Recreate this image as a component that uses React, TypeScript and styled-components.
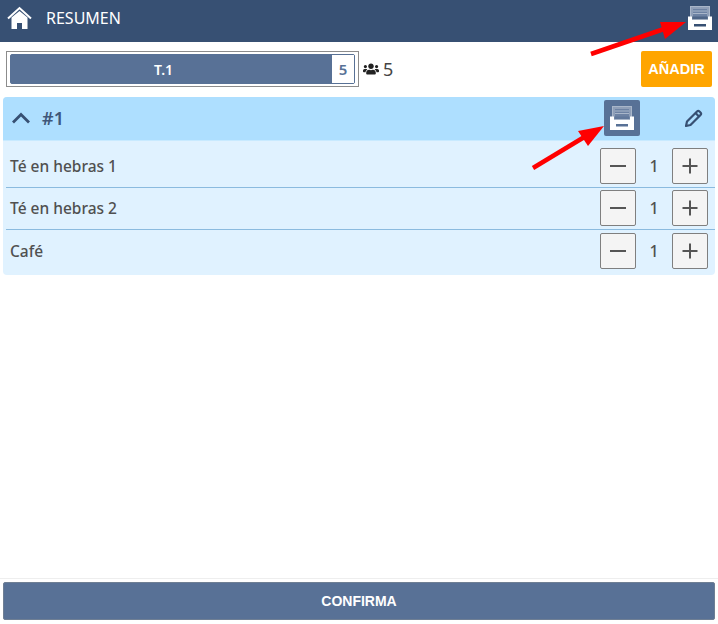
import React from 'react';
import styled, { createGlobalStyle } from 'styled-components';
import { FaUsers } from 'react-icons/fa';

const GlobalStyle = createGlobalStyle`
  html, body {
    margin: 0;
    padding: 0;
    background: #ffffff;
  }
  body {
    font-family: 'Noto Sans', 'Open Sans', sans-serif;
  }
`;

const Page = styled.div`
  position: relative;
  width: 718px;
  height: 624px;
  display: flex;
  flex-direction: column;
  overflow: hidden;
`;

const Header = styled.header`
  height: 42px;
  box-sizing: border-box;
  background: #375073;
  display: flex;
  align-items: center;
  padding: 0 6px 6px 7px;
  color: #ffffff;
`;

const HeaderTitle = styled.span`
  margin-left: 14px;
  font-size: 16px;
  flex: 1;
`;

const TopRow = styled.div`
  display: flex;
  align-items: center;
  padding: 9px 6px 10px;
`;

const TableBox = styled.div`
  width: 353px;
  height: 36px;
  box-sizing: border-box;
  border: 1px solid #8c8c8c;
  padding: 2px 3px;
  display: flex;
`;

const TableBar = styled.div`
  flex: 1;
  display: flex;
  background: #587196;
  border: 1px solid #587196;
  border-radius: 2px;
`;

const TableName = styled.div`
  flex: 1;
  display: flex;
  align-items: center;
  justify-content: center;
  padding-right: 16px;
  color: #ffffff;
  font-size: 14px;
  font-weight: 600;
`;

const TableCount = styled.div`
  width: 22px;
  background: #ffffff;
  color: #587196;
  font-size: 15px;
  font-weight: 600;
  display: flex;
  align-items: center;
  justify-content: center;
`;

const Guests = styled.div`
  display: flex;
  align-items: center;
  gap: 4px;
  margin-left: 4px;
  flex: 1;
  font-size: 18px;
  color: #444444;
`;

const AddButton = styled.button`
  width: 71px;
  height: 36px;
  border: none;
  border-radius: 2px;
  background: #ffa500;
  color: #ffffff;
  font-family: 'Liberation Sans', Arial, sans-serif;
  font-size: 14.5px;
  font-weight: 700;
  padding: 0;
`;

const Panel = styled.section`
  margin: 0 3px;
  background: #e0f2ff;
  border-radius: 4px;
  overflow: hidden;
`;

const PanelHead = styled.div`
  height: 44px;
  box-sizing: border-box;
  background: #aedfff;
  display: flex;
  align-items: center;
  padding: 0 11px 1px 8px;
  border-bottom: 1px solid #c8eaff;
`;

const OrderNo = styled.span`
  flex: 1;
  margin-left: 11px;
  color: #3f5779;
  font-size: 18px;
  font-weight: 600;
`;

const PrintButton = styled.button`
  width: 36px;
  height: 36px;
  border: none;
  padding: 0;
  border-radius: 2px;
  background: #587196;
  display: flex;
  align-items: center;
  justify-content: center;
  margin-right: 44px;
`;

const Row = styled.div<{ $top: number; $bottom: number; $last?: boolean }>`
  display: flex;
  align-items: center;
  margin-left: 3px;
  padding: ${(p) => p.$top}px 7px ${(p) => p.$bottom}px 4px;
  border-bottom: ${(p) => (p.$last ? 'none' : '1px solid #8bbbdf')};
`;

const RowName = styled.span`
  flex: 1;
  font-size: 15.5px;
  color: #505050;
  font-weight: 500;
`;

const StepButton = styled.button`
  width: 36px;
  height: 36px;
  box-sizing: border-box;
  border: 1px solid #7f7f7f;
  border-radius: 2px;
  background: #f4f4f4;
  padding: 0;
  display: flex;
  align-items: center;
  justify-content: center;
`;

const Qty = styled.span`
  width: 36px;
  text-align: center;
  font-size: 16px;
  font-weight: 500;
  color: #505050;
`;

const Footer = styled.footer`
  margin-top: auto;
  border-top: 1px solid #eeeeee;
  padding: 3px 3px 4px;
`;

const ConfirmButton = styled.button`
  display: block;
  width: 100%;
  height: 38px;
  box-sizing: border-box;
  border: 1px solid #6f7f94;
  border-radius: 2px;
  background: #587196;
  color: #ffffff;
  font-family: 'Liberation Sans', Arial, sans-serif;
  font-size: 14px;
  font-weight: 700;
  padding: 0;
`;

const ArrowLayer = styled.svg`
  position: absolute;
  left: 0;
  top: 0;
  pointer-events: none;
`;

const HomeIcon = () => (
  <svg width="25" height="24" viewBox="0 0 25 24">
    <path d="M1 12.500 12.500 2 24 12.500" fill="none" stroke="#fff" strokeWidth="2" />
    <path d="M4.500 11.500 12.500 5 20.500 11.500V23H15V17H10V23H4.500Z" fill="#fff" />
  </svg>
);

const PrintIcon = ({ bg }: { bg: string }) => (
  <svg width="24" height="24" viewBox="0 0 24 24">
    <rect x="2.500" y="0.500" width="19" height="14" fill="#8f9fb8" stroke="#a9b6c9" strokeWidth="1" />
    <rect x="5" y="3" width="14" height="10" fill="#6d82a3" />
    <path d="M5 5h14M5 7.500h14" stroke="#a9b6c9" strokeWidth="1" />
    <path d="M0 10.500H4V13.500H20V10.500H24V24H0Z" fill="#fff" />
    <path d="M4 10.500h16v3H4z" fill={bg} opacity="0.55" />
    <rect x="6" y="18" width="12" height="2.500" fill={bg} />
  </svg>
);

const PencilIcon = () => (
  <svg width="20" height="20" viewBox="0 0 20 20" fill="none" stroke="#375073" strokeWidth="2.200" strokeLinejoin="round">
    <path d="M3 13.500 13 3.500a1.800 1.800 0 0 1 2.500 0l1 1a1.800 1.800 0 0 1 0 2.500L6.500 17 2 18Z" />
    <path d="M11.500 5 15 8.500" />
  </svg>
);

const ChevronIcon = () => (
  <svg width="20" height="12" viewBox="0 0 20 12">
    <path d="M2 10.500 10 2.500l8 8" fill="none" stroke="#375073" strokeWidth="2.800" />
  </svg>
);

const MinusIcon = () => (
  <svg width="18" height="18" viewBox="0 0 18 18">
    <path d="M1 9h16" stroke="#555" strokeWidth="2" />
  </svg>
);

const PlusIcon = () => (
  <svg width="18" height="18" viewBox="0 0 18 18">
    <path d="M1.500 9h15M9 1.500v15" stroke="#555" strokeWidth="2" />
  </svg>
);

const items = [
  { name: 'Té en hebras 1', qty: 1, top: 7, bottom: 3 },
  { name: 'Té en hebras 2', qty: 1, top: 2, bottom: 3 },
  { name: 'Café', qty: 1, top: 3, bottom: 6, last: true },
];

export default function App() {
  return (
    <Page>
      <GlobalStyle />
      <Header>
        <HomeIcon />
        <HeaderTitle>RESUMEN</HeaderTitle>
        <PrintIcon bg="#375073" />
      </Header>

      <TopRow>
        <TableBox>
          <TableBar>
            <TableName>T.1</TableName>
            <TableCount>5</TableCount>
          </TableBar>
        </TableBox>
        <Guests>
          <FaUsers size={16} color="#222" />
          5
        </Guests>
        <AddButton>AÑADIR</AddButton>
      </TopRow>

      <Panel>
        <PanelHead>
          <ChevronIcon />
          <OrderNo>#1</OrderNo>
          <PrintButton>
            <PrintIcon bg="#587196" />
          </PrintButton>
          <PencilIcon />
        </PanelHead>
        {items.map((item) => (
          <Row key={item.name} $top={item.top} $bottom={item.bottom} $last={item.last}>
            <RowName>{item.name}</RowName>
            <StepButton>
              <MinusIcon />
            </StepButton>
            <Qty>{item.qty}</Qty>
            <StepButton>
              <PlusIcon />
            </StepButton>
          </Row>
        ))}
      </Panel>

      <Footer>
        <ConfirmButton>CONFIRMA</ConfirmButton>
      </Footer>

      {/* red annotation arrows drawn over the screenshot */}
      <ArrowLayer width="718" height="624" viewBox="0 0 718 624">
        <path d="M591 54 664 29" stroke="#ff0000" strokeWidth="4.500" />
        <path d="M686 22 660 22 665 39Z" fill="#ff0000" />
        <path d="M533 168 586 136" stroke="#ff0000" strokeWidth="4.500" />
        <path d="M604 126 578 131 588 146Z" fill="#ff0000" />
      </ArrowLayer>
    </Page>
  );
}
